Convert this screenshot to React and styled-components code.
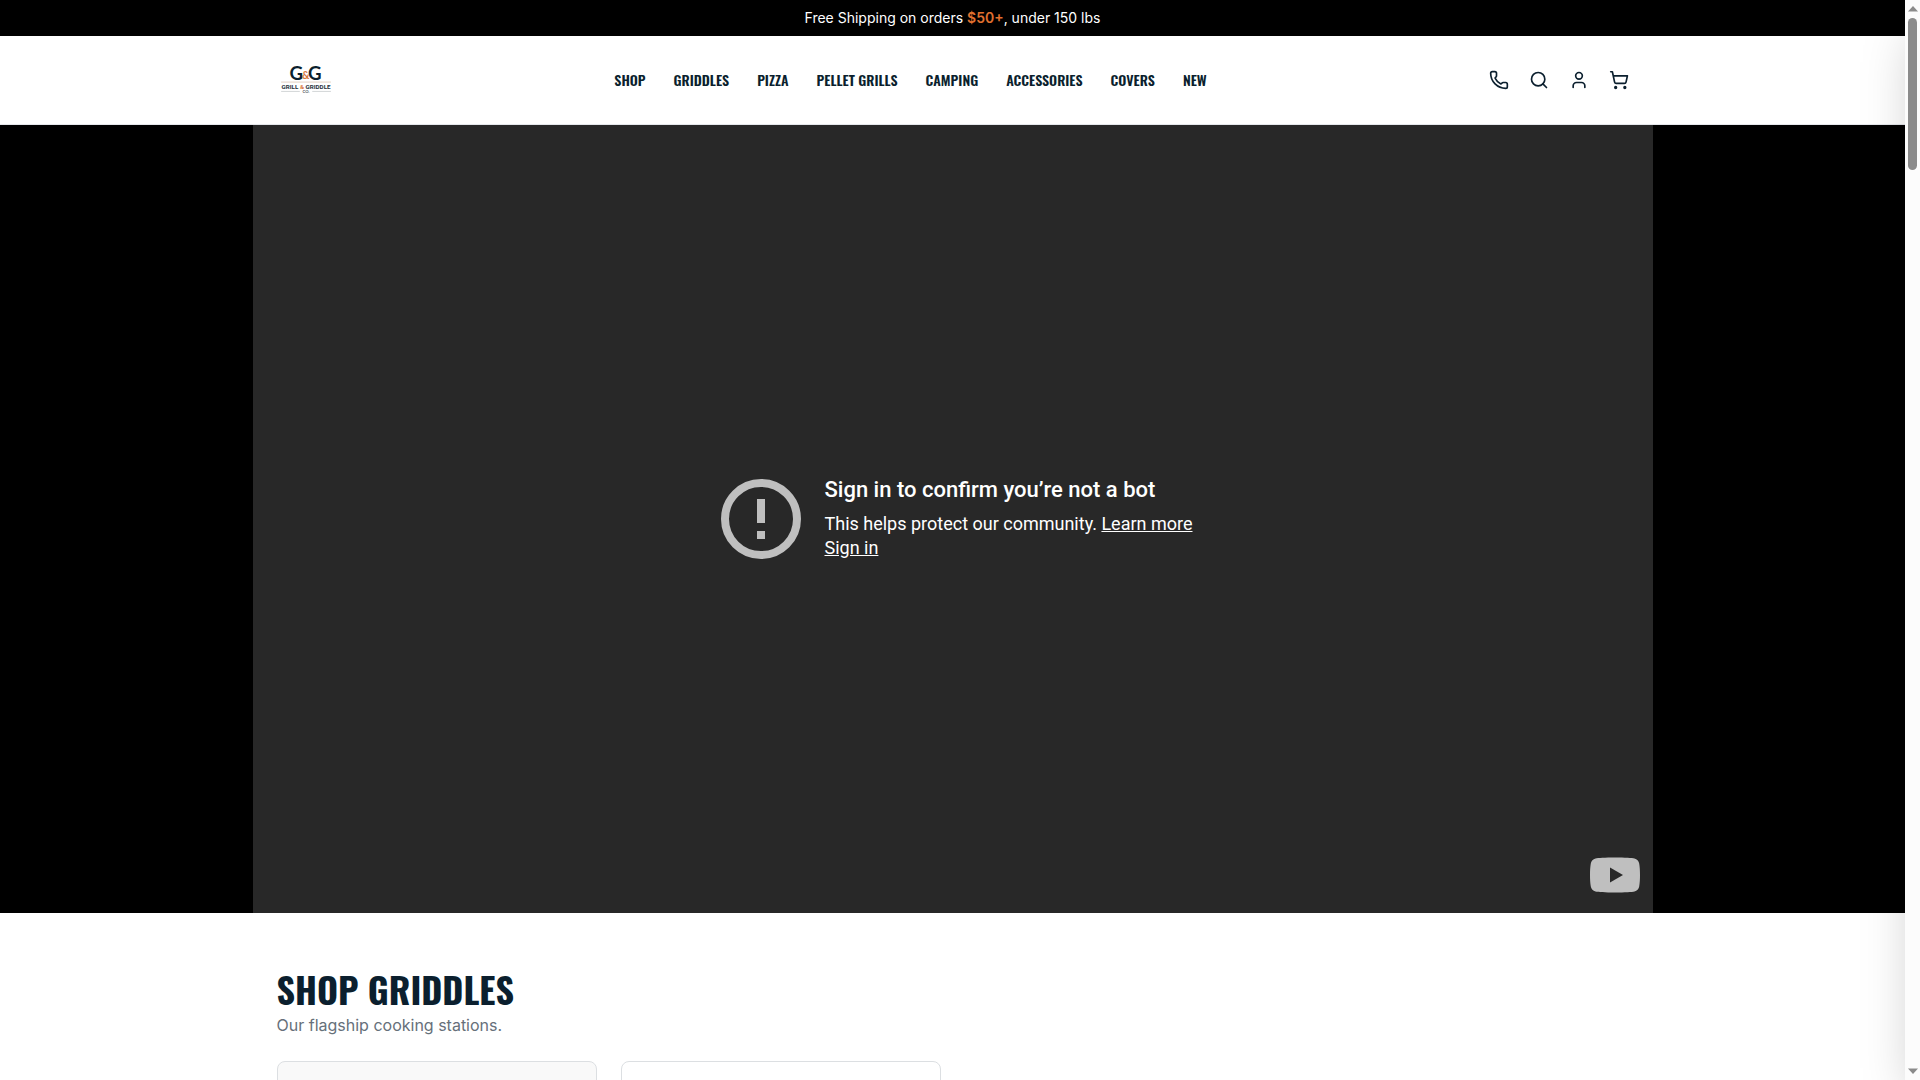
import React from "react";
import styled, { createGlobalStyle } from "styled-components";
import { Phone, Search, User, ShoppingCart } from "lucide-react";

const navLinks = [
  "Shop",
  "Griddles",
  "Pizza",
  "Pellet Grills",
  "Camping",
  "Accessories",
  "Covers",
  "New",
];

const actions = [
  { label: "Call us", Icon: Phone },
  { label: "Search", Icon: Search },
  { label: "Account", Icon: User },
  { label: "Cart", Icon: ShoppingCart },
];

function Logo() {
  return (
    <LogoSvg viewBox="0 0 54 54" role="img" aria-label="Grill & Griddle Co.">
      <text x="12" y="27" fontSize="18" fill="#0b1f2e">G</text>
      <text x="30" y="27" fontSize="18" fill="#0b1f2e">G</text>
      <text x="24" y="26" fontSize="10" fill="#d9773c">&amp;</text>
      <path d="M4 29H52" stroke="#c9a58c" strokeWidth="0.5" />
      <LogoWord x="28" y="36" textAnchor="middle">
        GRILL <tspan fill="#d9773c">&amp;</tspan> GRIDDLE
      </LogoWord>
      <path d="M4 38H22M34 38H52" stroke="#a8adb2" strokeWidth="0.5" />
      <LogoSmall x="28" y="40" textAnchor="middle">CO.</LogoSmall>
    </LogoSvg>
  );
}

function VideoError() {
  return (
    <Video>
      <Message>
        <AlertIcon viewBox="0 0 80 80" aria-hidden="true">
          <circle cx="40" cy="40" r="36" fill="none" stroke="#bfbfbf" strokeWidth="8" />
          <path d="M36 20h8v24h-8zM36 52h8v8h-8z" fill="#bfbfbf" />
        </AlertIcon>
        <MessageText>
          <Reason>Sign in to confirm you’re not a bot</Reason>
          <Subreason>
            This helps protect our community. <a href="#learn">Learn more</a>
            <br />
            <a href="#signin">Sign in</a>
          </Subreason>
        </MessageText>
      </Message>
      <YouTubeLink href="#youtube" aria-label="Watch on YouTube">
        <svg viewBox="0 0 50 36" width="50" height="36">
          <path
            d="M25 0.5C35 .5 42 .9 44.500 1.500C47 2 48.700 4 49.200 6.500C49.800 10 50 14 50 18S49.800 26 49.200 29.500C48.700 32 47 34 44.500 34.500C42 35.200 35 35.500 25 35.500S8 35.200 5.500 34.500C3 34 1.300 32 .8 29.500C.2 26 0 22 0 18S.2 10 .8 6.500C1.300 4 3 2 5.500 1.500C8 .9 15 .5 25 .5Z"
            fill="#bfbfbf"
          />
          <path d="M20 10.500L33 18L20 25.500Z" fill="#282828" />
        </svg>
      </YouTubeLink>
    </Video>
  );
}

function App() {
  return (
    <>
      <GlobalStyle />
      <Shell>
        <Page>
          <Banner>
            Free Shipping on orders <strong>$50+</strong>, under 150 lbs
          </Banner>
          <Header>
            <HeaderInner>
              <LogoLink href="#home">
                <Logo />
              </LogoLink>
              <Nav>
                {navLinks.map((name) => (
                  <NavLink href="#nav" key={name}>
                    {name}
                  </NavLink>
                ))}
              </Nav>
              <Actions>
                {actions.map(({ label, Icon }) => (
                  <IconButton key={label} type="button" aria-label={label}>
                    <Icon size={20} strokeWidth={2} />
                  </IconButton>
                ))}
              </Actions>
            </HeaderInner>
          </Header>
          <Hero>
            <VideoError />
          </Hero>
          <Section>
            <Heading>Shop Griddles</Heading>
            <Lead>Our flagship cooking stations.</Lead>
            <Cards>
              <Card $tint />
              <Card />
            </Cards>
          </Section>
          {/* closed cart drawer, only its shadow reaches the page */}
          <Drawer />
        </Page>
        <Scrollbar aria-hidden="true">
          <Arrow viewBox="0 0 10 6">
            <path d="M0 5.500L5 0L10 5.500Z" fill="#8b8b8b" />
          </Arrow>
          <Track>
            <Thumb />
          </Track>
          <Arrow viewBox="0 0 10 6">
            <path d="M0 0.500H10L5 6Z" fill="#8b8b8b" />
          </Arrow>
        </Scrollbar>
      </Shell>
    </>
  );
}

export default App;

const display = `Oswald, "Liberation Sans Narrow", sans-serif`;

const GlobalStyle = createGlobalStyle`
  * {
    box-sizing: border-box;
  }
  body {
    margin: 0;
    background: #fff;
    color: #0b1f2e;
    font-family: Inter, sans-serif;
  }
`;

const Shell = styled.div`
  height: 100vh;
  display: grid;
  grid-template-columns: minmax(0, 1fr) 15px;
`;

const Page = styled.div`
  position: relative;
  overflow: hidden;
`;

const Banner = styled.div`
  padding: 8px 16px;
  background: #000;
  color: #fff;
  font-size: 14px;
  line-height: 20px;
  text-align: center;

  strong {
    color: #e0702f;
    font-weight: 600;
  }
`;

const Header = styled.header`
  background: #fff;
  border-bottom: 1px solid #e5e7eb;
`;

const HeaderInner = styled.div`
  max-width: 1400px;
  margin: 0 auto;
  padding: 16px 24px;
  display: flex;
  align-items: center;
  justify-content: space-between;
`;

const LogoLink = styled.a`
  display: block;
  text-decoration: none;
`;

const LogoSvg = styled.svg`
  display: block;
  width: 56px;
  height: 56px;
  font-family: Lato, sans-serif;
  font-weight: 700;
`;

const LogoWord = styled.text`
  font-family: Roboto, sans-serif;
  font-size: 6px;
  fill: #26323c;
`;

const LogoSmall = styled.text`
  font-size: 4px;
  fill: #4d565e;
`;

const Nav = styled.nav`
  display: flex;
  gap: 28px;
`;

const NavLink = styled.a`
  color: #0b1f2e;
  font-family: ${display};
  font-size: 14px;
  font-weight: 600;
  line-height: 20px;
  text-decoration: none;
  text-transform: uppercase;
  white-space: nowrap;
`;

const Actions = styled.div`
  display: flex;
  gap: 20px;
`;

const IconButton = styled.button`
  display: block;
  padding: 0;
  border: 0;
  background: none;
  color: #0b1f2e;
  cursor: pointer;

  svg {
    display: block;
  }
`;

const Hero = styled.section`
  background: #000;
`;

const Video = styled.div`
  position: relative;
  max-width: 1400px;
  aspect-ratio: 16 / 9;
  margin: 0 auto;
  background: #282828;
  color: #fff;
  font-family: Roboto, sans-serif;
  display: flex;
  align-items: center;
  justify-content: center;
`;

const Message = styled.div`
  padding-left: 8px;
  display: flex;
  align-items: center;
  gap: 24px;
`;

const MessageText = styled.div`
  padding-bottom: 2px;
`;

const AlertIcon = styled.svg`
  width: 80px;
  height: 80px;
`;

const Reason = styled.div`
  font-size: 22px;
  font-weight: 500;
  line-height: 28px;
`;

const Subreason = styled.div`
  margin-top: 8px;
  font-size: 18px;
  line-height: 24px;

  a {
    color: inherit;
  }
`;

const YouTubeLink = styled.a`
  position: absolute;
  right: 13px;
  bottom: 20px;

  svg {
    display: block;
  }
`;

const Section = styled.section`
  max-width: 1400px;
  margin: 0 auto;
  padding: 56px 24px;
`;

const Heading = styled.h2`
  margin: 0 0 4px;
  font-family: ${display};
  font-size: 36px;
  font-weight: 700;
  line-height: 40px;
  text-transform: uppercase;
`;

const Lead = styled.p`
  margin: 0;
  color: #66707a;
  font-size: 16px;
  line-height: 24px;
`;

const Cards = styled.div`
  margin-top: 24px;
  display: grid;
  grid-template-columns: repeat(4, 1fr);
  gap: 24px;
`;

const Card = styled.article`
  aspect-ratio: 3 / 4;
  border: 1px solid #dcdfe2;
  border-radius: 8px;
  background: ${(props) => (props.$tint ? "#f9f9f9" : "#fff")};
`;

const Drawer = styled.aside`
  position: absolute;
  top: 0;
  left: 100%;
  width: 400px;
  height: 100%;
  background: #fff;
  box-shadow: 0 25px 50px -12px rgba(0, 0, 0, 0.25);
`;

const Scrollbar = styled.div`
  background: #fcfcfc;
  display: flex;
  flex-direction: column;
  align-items: center;
  padding: 6px 0;
`;

const Arrow = styled.svg`
  width: 10px;
  height: 6px;
`;

const Track = styled.div`
  flex: 1;
  padding: 6px 0;
`;

const Thumb = styled.div`
  width: 9px;
  height: 152px;
  border-radius: 5px;
  background: #8b8b8b;
`;
